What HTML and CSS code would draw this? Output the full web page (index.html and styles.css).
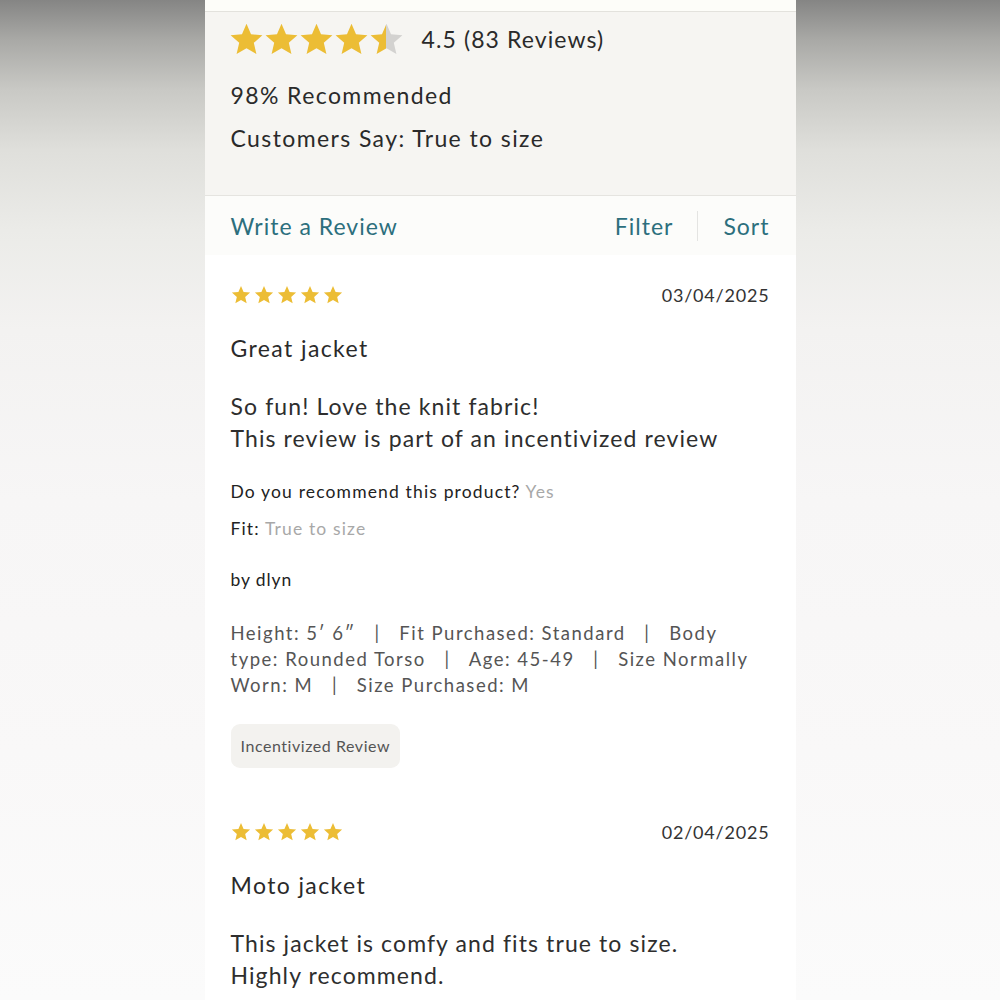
FILE: index.html
```html
<!DOCTYPE html>
<html lang="en">
<head>
<meta charset="utf-8">
<title>Reviews</title>
<link rel="stylesheet" href="styles.css">
</head>
<body>
<svg class="defs" width="0" height="0" aria-hidden="true">
  <defs>
    <symbol id="star" viewBox="0 0 24 24">
      <polygon points="12,1.2 15.1,8.4 22.9,9.1 17,14.3 18.8,22 12,18 5.2,22 7,14.3 1.1,9.1 8.9,8.4"/>
    </symbol>
    <linearGradient id="half" x1="0" x2="1" y1="0" y2="0">
      <stop offset="0.5" stop-color="#ecbd35"/>
      <stop offset="0.5" stop-color="#d3d2d0"/>
    </linearGradient>
  </defs>
</svg>
<main class="panel">
  <div class="topstrip"></div>
  <section class="summary">
    <div class="rating-row">
      <div class="big-stars">
        <svg class="bstar"><use href="#star"/></svg>
        <svg class="bstar"><use href="#star"/></svg>
        <svg class="bstar"><use href="#star"/></svg>
        <svg class="bstar"><use href="#star"/></svg>
        <svg class="bstar half"><use href="#star"/></svg>
      </div>
      <span class="rating-text">4.5 (83 Reviews)</span>
    </div>
    <p class="summary-line first">98% Recommended</p>
    <p class="summary-line second">Customers Say: True to size</p>
  </section>
  <nav class="toolbar">
    <a class="link">Write a Review</a>
    <div class="tools">
      <a class="link">Filter</a>
      <span class="divider"></span>
      <a class="link">Sort</a>
    </div>
  </nav>
  <article class="review">
    <div class="review-head">
      <div class="small-stars">
        <svg class="sstar"><use href="#star"/></svg>
        <svg class="sstar"><use href="#star"/></svg>
        <svg class="sstar"><use href="#star"/></svg>
        <svg class="sstar"><use href="#star"/></svg>
        <svg class="sstar"><use href="#star"/></svg>
      </div>
      <span class="date">03/04/2025</span>
    </div>
    <h2 class="title">Great jacket</h2>
    <p class="body-text">So fun! Love the knit fabric!<br>This review is part of an incentivized review</p>
    <p class="qa first-qa">Do you recommend this product? <span class="ans">Yes</span></p>
    <p class="qa">Fit: <span class="ans">True to size</span></p>
    <p class="author">by dlyn</p>
    <p class="meta">Height: 5′ 6″ &nbsp; | &nbsp; Fit Purchased: Standard &nbsp; | &nbsp; Body type: Rounded Torso &nbsp; | &nbsp; Age: 45-49 &nbsp; | &nbsp; Size Normally Worn: M &nbsp; | &nbsp; Size Purchased: M</p>
    <span class="badge">Incentivized Review</span>
  </article>
  <article class="review">
    <div class="review-head">
      <div class="small-stars">
        <svg class="sstar"><use href="#star"/></svg>
        <svg class="sstar"><use href="#star"/></svg>
        <svg class="sstar"><use href="#star"/></svg>
        <svg class="sstar"><use href="#star"/></svg>
        <svg class="sstar"><use href="#star"/></svg>
      </div>
      <span class="date">02/04/2025</span>
    </div>
    <h2 class="title">Moto jacket</h2>
    <p class="body-text">This jacket is comfy and fits true to size.<br>Highly recommend.</p>
  </article>
</main>
</body>
</html>
```
FILE: styles.css
```css
* { box-sizing: border-box; }
html, body { margin: 0; padding: 0; }
body {
  height: 1000px;
  overflow: hidden;
  font-family: "Lato", "Noto Sans", sans-serif;
  color: #2a2a2a;
  background: linear-gradient(to bottom,
    #858584 0px, #a9a9a6 40px, #c9c9c5 90px, #dfdfdb 150px,
    #ebebe8 230px, #f3f2f1 330px, #f7f6f6 500px, #f9f8f8 750px, #fbfbfb 1000px);
}
.defs { position: absolute; }
.panel {
  width: 591px;
  margin: 0 auto;
  background: #ffffff;
  min-height: 1000px;
}
.topstrip {
  height: 12px;
  background: #fdfdf9;
  border-bottom: 1px solid #e3e2dd;
}
.summary {
  background: #f6f5f2;
  padding: 10px 26px 42px 26px;
  border-bottom: 1px solid #e5e4e0;
}
.rating-row {
  display: flex;
  align-items: center;
  height: 34px;
}
.big-stars { display: flex; margin-left: -2px; margin-right: 18px; }
.bstar { width: 35px; height: 35px; fill: #ecbd35; }
.bstar.half { fill: url(#half); }
.rating-text { font-size: 23px; letter-spacing: 1.1px; }
.summary-line {
  margin: 0;
  font-size: 23px;
  line-height: 30px;
  letter-spacing: 1.4px;
}
.summary-line.first { margin-top: 24px; }
.summary-line.second { margin-top: 13px; }
.toolbar {
  height: 59px;
  background: #fcfcfa;
  display: flex;
  align-items: center;
  justify-content: space-between;
  padding: 0 26px 0 26px;
}
.link {
  color: #2c6f7d;
  font-size: 23px;
  letter-spacing: 1px;
  cursor: pointer;
}
.tools { display: flex; align-items: center; }
.divider {
  width: 1px;
  height: 30px;
  background: #e4e4e2;
  margin: 0 25px 0 24px;
}
.review {
  padding: 28px 26px 24px 26px;
  background: #ffffff;
}
.review-head {
  display: flex;
  justify-content: space-between;
  align-items: center;
  height: 24px;
}
.small-stars { display: flex; gap: 3px; }
.sstar { width: 20px; height: 20px; fill: #ecbd35; }
.date { font-size: 18px; color: #333; letter-spacing: 0.8px; }
.title {
  margin: 26px 0 0 0;
  font-size: 23px;
  font-weight: 400;
  line-height: 30px;
  letter-spacing: 1.4px;
}
.body-text {
  margin: 27px 0 0 0;
  font-size: 23px;
  line-height: 32px;
  letter-spacing: 1.1px;
  color: #2e2e2e;
}
.qa {
  margin: 13px 0 0 0;
  font-size: 17.5px;
  line-height: 24px;
  letter-spacing: 1.15px;
  color: #222;
}
.qa.first-qa { margin-top: 26px; }
.ans { color: #a8a8a8; }
.author {
  margin: 27px 0 0 0;
  font-size: 17.5px;
  line-height: 24px;
  letter-spacing: 0.9px;
  color: #222;
}
.meta {
  margin: 28px 0 0 0;
  font-size: 18.5px;
  line-height: 26px;
  color: #555;
  letter-spacing: 1.5px;
  max-width: 534px;
}
.badge {
  display: inline-block;
  margin-top: 26px;
  height: 44px;
  line-height: 44px;
  padding: 0 10px;
  background: #f3f2ef;
  border-radius: 9px;
  font-size: 16px;
  letter-spacing: 0.55px;
  color: #555;
}
```
